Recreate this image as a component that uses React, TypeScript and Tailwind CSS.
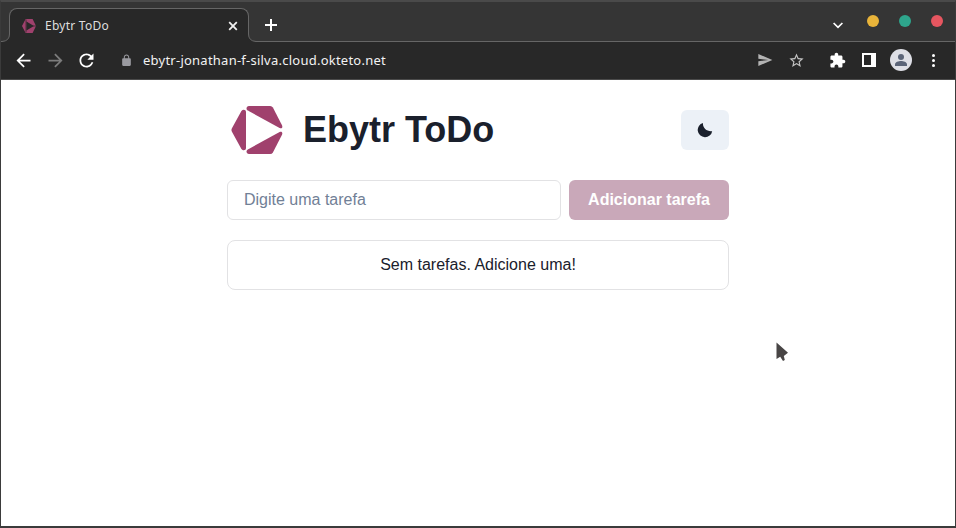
import type { ReactNode } from "react";

function Icon({ d, size, className = "" }: { d: string; size: number; className?: string }) {
  return (
    <svg viewBox="0 0 24 24" width={size} height={size} fill="currentColor" className={"block shrink-0 " + className}>
      <path d={d} />
    </svg>
  );
}

function Slot({ width, className = "", children }: { width: number; className?: string; children: ReactNode }) {
  return (
    <span className={"flex h-full shrink-0 items-center justify-center " + className} style={{ width }}>
      {children}
    </span>
  );
}

function Logo({ width, height, className = "" }: { width: number; height: number; className?: string }) {
  return (
    <svg viewBox="0 0 52 48" width={width} height={height} fill="#a0416d" preserveAspectRatio="none" className={"block shrink-0 " + className}>
      <path d="M10.4 4.9C12 3 15 3.5 15 6V42C15 44.5 12 45 10.4 42.9L.8 25.4Q0 24 .8 22.6Z" />
      <path d="M18 0H39.2Q41 0 41.9 1.5L51 19.2C52 21.6 50.6 23 48.6 22L16.8 4.6C14.6 3.2 15.4 0 18 0Z" />
      <path d="M18 48H39.2Q41 48 41.9 46.5L51 28.8C52 26.4 50.6 25 48.6 26L16.8 43.4C14.6 44.8 15.4 48 18 48Z" />
    </svg>
  );
}

function TabStrip() {
  return (
    <div className="flex h-10 shrink-0 border-b border-[#666666] bg-[#353535] pl-2">
      <div className="relative mt-[6px] flex h-[34px] w-60 shrink-0 items-center rounded-t-lg border border-b-0 border-[#666666] bg-[#282828] pl-3 pr-[10px]">
        <svg className="absolute -left-[8px] bottom-0 block" width="8" height="8" viewBox="0 0 8 8">
          <path d="M0 7.5Q7.5 7 7.5 0H8V8H0Z" fill="#282828" />
          <path d="M0 7.5Q7.5 7 7.5 0" fill="none" stroke="#666666" />
        </svg>
        <svg className="absolute -right-[8px] bottom-0 block" width="8" height="8" viewBox="0 0 8 8">
          <path d="M8 7.5Q.5 7 .5 0H0V8H8Z" fill="#282828" />
          <path d="M8 7.5Q.5 7 .5 0" fill="none" stroke="#666666" />
        </svg>
        <svg width="14" height="14" viewBox="0 0 14 14" fill="#a0416d" className="block shrink-0">
          <path fillRule="evenodd" d="M3.6 0H10.6L14 7L10.6 14H3.6L0 7ZM4.4 2.4V11.6L12 7Z" />
          <path d="M4 .5V13.5M11.2 7H14" stroke="#282828" strokeWidth=".7" />
        </svg>
        <span className="ml-[9px] flex-1 whitespace-nowrap text-[12px] leading-4 tracking-[0.25px] text-[#dedede]">Ebytr ToDo</span>
        <svg width="10" height="10" viewBox="0 0 10 10" className="block">
          <path d="M1.2 1.2 8.8 8.8M8.8 1.2 1.2 8.8" stroke="#f1f1f1" strokeWidth="1.8" />
        </svg>
      </div>
      <svg width="12" height="12" viewBox="0 0 12 12" className="ml-4 mt-[17px] block">
        <path d="M6 0V12M0 6H12" stroke="#fff" strokeWidth="2" />
      </svg>
      <div className="ml-auto flex h-[38px] items-center pr-3">
        <svg width="10" height="7" viewBox="0 0 10 7" className="mr-6 mt-[8px] block">
          <path d="M.6 1 5 5.4 9.4 1" fill="none" stroke="#fff" strokeWidth="1.7" />
        </svg>
        <div className="flex gap-5">
          <span className="size-3 rounded-full bg-[#e9b43a]" />
          <span className="size-3 rounded-full bg-[#2ea58c]" />
          <span className="size-3 rounded-full bg-[#e65660]" />
        </div>
      </div>
    </div>
  );
}

function Toolbar() {
  return (
    <div className="flex h-[38px] shrink-0 items-center border-b border-[#4b4b4b] bg-[#282828] pl-[6px] text-white">
      <Slot width={32} className="pb-px">
        <Icon size={21} d="M20 11H7.83l5.59-5.59L12 4l-8 8 8 8 1.41-1.41L7.83 13H20v-2z" />
      </Slot>
      <Slot width={32} className="pb-px text-[#7c7c7c]">
        <Icon size={21} d="M12 4l-1.41 1.41L16.17 11H4v2h12.17l-5.58 5.59L12 20l8-8z" />
      </Slot>
      <Slot width={32} className="pb-px pr-px">
        <Icon size={21} d="M17.65 6.35C16.2 4.9 14.21 4 12 4c-4.42 0-7.99 3.58-7.99 8s3.57 8 7.99 8c3.73 0 6.84-2.55 7.73-6h-2.08c-.82 2.33-3.04 4-5.65 4-3.31 0-6-2.69-6-6s2.69-6 6-6c1.66 0 3.14.69 4.22 1.78L13 11h7V4l-2.35 2.35z" />
      </Slot>
      <div className="ml-[17px] flex flex-1 items-center pb-px">
        <Icon size={13} className="text-[#9a9aa0]" d="M18 8h-1V6c0-2.76-2.24-5-5-5S7 3.24 7 6v2H6c-1.1 0-2 .9-2 2v10c0 1.1.9 2 2 2h12c1.1 0 2-.9 2-2V10c0-1.1-.9-2-2-2zM15.1 8H8.9V6c0-1.71 1.39-3.1 3.1-3.1s3.1 1.39 3.1 3.1v2z" />
        <span className="ml-[10px] whitespace-nowrap text-[13px] leading-4 tracking-[0.24px] text-[#f2f2f2]">ebytr-jonathan-f-silva.cloud.okteto.net</span>
      </div>
      <Slot width={32} className="pb-px text-[#b4b4b4]">
        <Icon size={16} d="M2.01 21 23 12 2.01 3 2 10l15 2-15 2z" />
      </Slot>
      <Slot width={32} className="pr-px text-[#c4c4c4]">
        <Icon size={17} d="M22 9.24l-7.19-.62L12 2 9.19 8.63 2 9.24l5.46 4.73L5.82 21 12 17.27 18.18 21l-1.63-7.03L22 9.24zM12 15.4l-3.76 2.27 1-4.28-3.32-2.88 4.38-.38L12 6.1l1.71 4.04 4.38.38-3.32 2.88 1 4.28L12 15.4z" />
      </Slot>
      <Slot width={48}>
        <Icon size={17} d="M20.5 11H19V7c0-1.1-.9-2-2-2h-4V3.5C13 2.12 11.88 1 10.5 1S8 2.12 8 3.5V5H4c-1.1 0-1.99.9-1.99 2v3.8H3.5c1.49 0 2.7 1.21 2.7 2.7s-1.21 2.7-2.7 2.7H2V20c0 1.1.9 2 2 2h3.8v-1.5c0-1.49 1.21-2.7 2.7-2.7 1.49 0 2.7 1.21 2.7 2.7V22H17c1.1 0 2-.9 2-2v-4h1.5c1.38 0 2.5-1.12 2.5-2.5S21.88 11 20.5 11z" />
      </Slot>
      <Slot width={16} className="pb-px">
        <svg width="14" height="14" viewBox="0 0 14 14" className="block">
          <path fill="#fff" fillRule="evenodd" d="M0 0H14V14H0ZM2 2V12H9V2Z" />
        </svg>
      </Slot>
      <Slot width={48} className="pb-px">
        <svg width="22" height="22" viewBox="0 0 22 22" className="block">
          <circle cx="11" cy="11" r="11" fill="#dedfe6" />
          <circle cx="11" cy="7.9" r="3" fill="#5b6478" />
          <path d="M5 17V15.4C5 13.2 8.6 12 11 12S17 13.2 17 15.4V17Z" fill="#5b6478" />
        </svg>
      </Slot>
      <Slot width={17} className="mr-[13px]">
        <svg width="3" height="13" viewBox="0 0 3 13" className="block">
          <circle cx="1.5" cy="1.5" r="1.5" fill="#fff" />
          <circle cx="1.5" cy="6.5" r="1.5" fill="#fff" />
          <circle cx="1.5" cy="11.5" r="1.5" fill="#fff" />
        </svg>
      </Slot>
    </div>
  );
}

function TodoPage() {
  return (
    <main className="mx-auto w-[502px] pt-[26px] font-['Liberation_Sans',Arial,sans-serif] text-base text-[#1a202c]">
      <header className="flex h-12 items-center">
        <Logo width={52} height={48} className="ml-1" />
        <h1 className="ml-5 flex-1 whitespace-nowrap text-[36px] font-bold leading-[48px]">Ebytr ToDo</h1>
        <button aria-label="Modo escuro" className="flex h-10 w-12 items-center justify-center rounded-md bg-[#ecf1f7]">
          <svg width="16" height="16" viewBox="0 0 16 16" className="block">
            <path d="M6 .9C5.4 5.4 9.4 9.9 15.2 9.2A7.3 7.3 0 1 1 6 .9Z" fill="#1a202c" />
          </svg>
        </button>
      </header>
      <form className="mt-[26px] flex gap-2">
        <input placeholder="Digite uma tarefa" className="h-10 min-w-0 flex-1 rounded-md border border-[#e2e2e4] px-4 placeholder:text-[#718096]" />
        <button type="button" className="h-10 w-40 whitespace-nowrap rounded-md bg-[#c9a8b9] font-bold text-white">Adicionar tarefa</button>
      </form>
      <p className="mt-5 flex h-[50px] items-center justify-center rounded-lg border border-[#e2e2e4]">Sem tarefas. Adicione uma!</p>
    </main>
  );
}

export default function App() {
  return (
    <div className="relative flex h-[528px] w-[956px] flex-col overflow-hidden border-x border-b-2 border-t-2 border-[#3b3b3b] border-t-[#4a4a4a] bg-white font-['Noto_Sans',sans-serif]">
      <TabStrip />
      <Toolbar />
      <TodoPage />
      <svg className="absolute left-[773px] top-[338px] block" width="18" height="24" viewBox="0 0 18 24">
        <path d="M2.5 2.5V19L6.2 16.8L9 21L10.8 20L9.8 16L14 12.8Z" fill="#484545" stroke="#fff" strokeWidth="2" paintOrder="stroke" />
      </svg>
    </div>
  );
}
